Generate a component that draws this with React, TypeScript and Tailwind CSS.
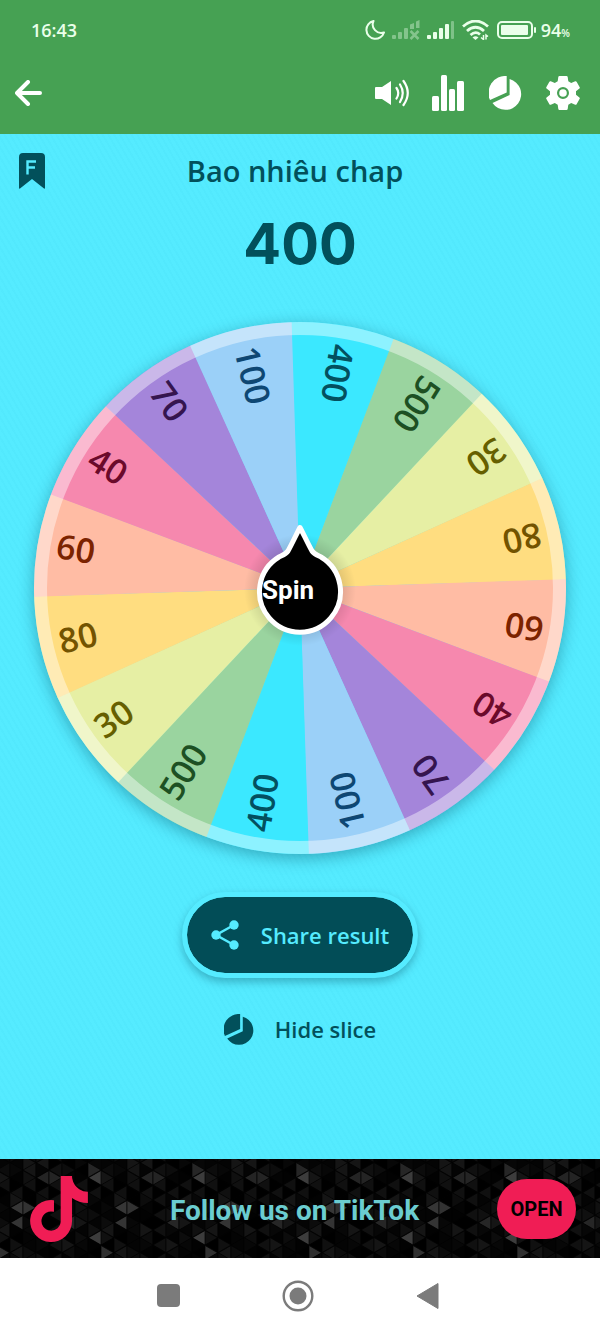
import type { ReactNode } from 'react';
import { FaTiktok } from 'react-icons/fa';

interface Slice {
  label: string;
  fill: string;
  ink: string;
}

const OPTIONS: Slice[] = [
  { label: '400', fill: '#3be8ff', ink: '#03505f' },
  { label: '500', fill: '#9ad49f', ink: '#1d5023' },
  { label: '30', fill: '#e6efa4', ink: '#665f00' },
  { label: '80', fill: '#ffdd80', ink: '#735300' },
  { label: '60', fill: '#ffbca4', ink: '#7c2300' },
  { label: '40', fill: '#f688ae', ink: '#6b0a2b' },
  { label: '70', fill: '#a485da', ink: '#35154f' },
  { label: '100', fill: '#9bd0f8', ink: '#0e4773' },
];

// every option appears twice on the wheel
const SLICES = [...OPTIONS, ...OPTIONS];
const STEP = 360 / SLICES.length;
const START = -1.9;
const RADIUS = 266;

const point = (deg: number, r: number) => {
  const rad = (deg * Math.PI) / 180;
  return `${(Math.sin(rad) * r).toFixed(2)} ${(-Math.cos(rad) * r).toFixed(2)}`;
};

const Wheel = () => (
  <div className="relative w-full max-w-[532px] aspect-square rounded-full shadow-[0_4px_16px_rgba(0,70,90,0.4)]">
    <svg viewBox="-266 -266 532 532" className="block w-full h-full">
      <defs>
        <radialGradient id="hub-shade" gradientUnits="userSpaceOnUse" cx="0" cy="2" r="56">
          <stop offset="0.7" stopColor="#000" stopOpacity="0.13" />
          <stop offset="1" stopColor="#000" stopOpacity="0" />
        </radialGradient>
      </defs>
      {SLICES.map((slice, i) => {
        const from = START + i * STEP;
        return (
          <path
            key={i}
            d={`M0 0L${point(from, RADIUS)}A${RADIUS} ${RADIUS} 0 0 1 ${point(from + STEP + 0.1, RADIUS)}Z`}
            fill={slice.fill}
          />
        );
      })}
      <circle r="259.5" fill="none" stroke="#fff" strokeOpacity="0.42" strokeWidth="13" />
      <circle cy="2" r="56" fill="url(#hub-shade)" />
      {SLICES.map((slice, i) => (
        <text
          key={i}
          x="-247"
          y="10"
          transform={`rotate(${START + (i + 0.5) * STEP + 90})`}
          fill={slice.ink}
          className="font-['Open_Sans',sans-serif] font-semibold text-[34px]"
        >
          {slice.label}
        </text>
      ))}
    </svg>
    <button className="absolute left-1/2 top-1/2 -translate-x-1/2 -translate-y-1/2 w-[88px] h-[132px] text-left pl-[6px] pt-1 text-white font-['Roboto',sans-serif] font-bold text-[26px] leading-8">
      <svg viewBox="-44 -66 88 132" className="absolute inset-0 w-full h-full">
        <path
          d="M0 -60.500C4 -53 8 -44 12 -37C14 -34 17 -33 21 -31A40.500 40.500 0 1 1 -21 -31C-17 -33 -14 -34 -12 -37C-8 -44 -4 -53 0 -60.500Z"
          fill="#000"
          stroke="#fff"
          strokeWidth="5"
          strokeLinejoin="round"
        />
      </svg>
      <span className="relative">Spin</span>
    </button>
  </div>
);

const PieIcon = ({ className }: { className: string }) => (
  <svg viewBox="0 0 34 34" className={className} fill="currentColor">
    <path d="M17.700 0A17 17 0 0 0 1 24L17.700 16.500Z" />
    <path d="M20.600 3A15.700 15.700 0 1 1 3.500 27L20.600 19Z" />
  </svg>
);

const MoonIcon = () => (
  <svg viewBox="0 0 20 20" className="w-5 h-5" fill="none" stroke="currentColor" strokeWidth="2" strokeLinejoin="round">
    <path d="M8.500 1A9 9 0 1 0 19 12.500A8.500 8.500 0 0 1 8.500 1Z" />
  </svg>
);

const SignalIcon = ({ lost = false }: { lost?: boolean }) => (
  <svg viewBox="0 0 28 20" className="w-7 h-5" fill="currentColor">
    <g opacity={lost ? 0.38 : 1}>
      <rect x="0" y="15" width="4" height="4" rx="1" />
      <rect x="6" y="12" width="4" height="7" rx="1" />
      <rect x="12" y="8" width="4" height="11" rx="1" />
      {lost ? (
        <>
          <path d="M18 4.500L22 3V9H18ZM24 1.500L27.500 0V8H24Z" />
          <path d="M18.500 11L26.500 19M26.500 11L18.500 19" fill="none" stroke="currentColor" strokeWidth="2.500" />
        </>
      ) : (
        <>
          <rect x="18" y="4" width="4" height="15" rx="1" />
          <rect x="24" y="1" width="3" height="18" rx="1" opacity="0.35" />
        </>
      )}
    </g>
  </svg>
);

const WifiIcon = () => (
  <svg viewBox="0 0 28 20" className="w-7 h-5" fill="none" stroke="currentColor" strokeWidth="2.800">
    <path d="M1 6.500Q13.500 -4.500 26 6.500" />
    <path d="M5 11Q13.500 3.500 22 11" />
    <path d="M8.500 15Q13.500 10.500 18 14.500" />
    <path d="M13.500 20L10.500 17.500Q13.500 15 16.500 17.500Z" fill="currentColor" stroke="none" />
    <path d="M21.500 15V19.500L19 17.500M24 19.500V15L26 16.500" strokeWidth="1.500" />
  </svg>
);

const BatteryIcon = () => (
  <svg viewBox="0 0 40 18" className="w-10 h-[18px]">
    <rect x="1" y="1" width="34" height="16" rx="4" fill="none" stroke="currentColor" strokeWidth="2" />
    <rect x="4" y="4" width="27" height="10" rx="1" fill="currentColor" />
    <rect x="37" y="6" width="2" height="6" rx="1" fill="currentColor" />
  </svg>
);

const VolumeIcon = () => (
  <svg viewBox="0 0 34 34" className="w-full h-full" fill="none" stroke="currentColor" strokeWidth="2.200" strokeLinecap="round">
    <path d="M1 11H7L16 5V29L7 23H1Q0 23 0 22V12Q0 11 1 11Z" fill="currentColor" stroke="none" />
    <path d="M21.500 12Q25 17 21.500 22.500M25 8.500Q30.500 17 25 26M28.500 5Q37 17 28.500 29" />
  </svg>
);

const BarsIcon = () => (
  <svg viewBox="0 0 34 36" className="w-full h-full" fill="currentColor">
    <rect x="0" y="21" width="7" height="15" rx="1.500" />
    <rect x="9" y="0" width="6" height="36" rx="1.500" />
    <rect x="17" y="14" width="6" height="22" rx="1.500" />
    <rect x="25" y="6" width="7" height="30" rx="1.500" />
  </svg>
);

const GearIcon = () => (
  <svg viewBox="0 0 34 34" className="w-full h-full" fill="currentColor" fillRule="evenodd">
    <path d="M13.500 0H20.500Q21.500 0 21.700 1L22.300 5.200L25.200 6.900L29.200 5.300Q30.100 5 30.600 5.800L33.700 11.200Q34.100 12 33.400 12.600L30 15.300V18.700L33.400 21.400Q34.100 22 33.700 22.800L30.600 28.200Q30.100 29 29.200 28.700L25.200 27.100L22.300 28.800L21.700 33Q21.500 34 20.500 34H13.500Q12.500 34 12.300 33L11.700 28.800L8.800 27.100L4.800 28.700Q3.900 29 3.400 28.200L0.300 22.800Q-0.100 22 0.600 21.400L4 18.700V15.300L0.600 12.600Q-0.100 12 0.300 11.200L3.400 5.800Q3.900 5 4.800 5.300L8.800 6.900L11.700 5.200L12.300 1Q12.500 0 13.500 0ZM17 11A6 6 0 1 0 17 23A6 6 0 1 0 17 11Z" />
    <circle cx="17" cy="17" r="3.800" />
  </svg>
);

const IconButton = ({ label, children }: { label: string; children: ReactNode }) => (
  <button aria-label={label} className="w-[34px] h-9 flex items-center justify-center">
    {children}
  </button>
);

// Banner backdrop: columns of small triangles, a few of them lit
const COL = 13;
const SIDE = 15;
const LIT: Record<string, string> = {
  'L7-1': '#3c3c3c',
  'R7-1': '#262626',
  'L1-3': '#363636',
  'R2-3': '#323232',
  'L1-4': '#343434',
  'L7-5': '#3c3c3c',
  'R0-6': '#303030',
  'L5-4': '#262626',
  'R4-1': '#242424',
  'L3-1': '#242424',
};
const DARK = ['#040404', '#101010', '#070707', '#151515', '#020202', '#0c0c0c', '#000000'];

const TRIANGLES = Array.from({ length: 8 * 8 * 2 }, (_, n) => {
  const left = n % 2 === 0;
  const col = Math.floor(n / 2) % 8;
  const row = Math.floor(n / 16);
  const line = left ? col + 1 : col;
  const cy = row * SIDE + (line % 2 === 0 ? 4 : -4);
  const base = line * COL;
  const tip = left ? base - COL : base + COL;
  return {
    points: `${base},${cy - 7.5} ${base},${cy + 7.5} ${tip},${cy}`,
    fill: LIT[`${left ? 'L' : 'R'}${col}-${row}`] ?? DARK[(col * 5 + row * 3 + (left ? 2 : 0) + col * row) % 7],
  };
});

const BannerPattern = () => (
  <svg className="absolute inset-0 w-full h-full">
    <defs>
      <pattern id="triangles" x="-3" width="104" height="106" patternUnits="userSpaceOnUse">
        <rect width="104" height="106" fill="#060606" />
        {TRIANGLES.map((t, i) => (
          <polygon key={i} points={t.points} fill={t.fill} stroke="#000" strokeWidth="0.7" />
        ))}
      </pattern>
    </defs>
    <rect width="100%" height="100%" fill="url(#triangles)" />
  </svg>
);

const App = () => {
  return (
    <div className="min-h-screen flex flex-col bg-white font-['Open_Sans',sans-serif]">
      <header className="bg-[#46a153] text-white pb-2">
        <div className="h-[60px] pl-[31px] pr-[30px] flex items-center justify-between text-[#eaffea]">
          <span className="text-lg font-semibold">16:43</span>
          <div className="flex items-center gap-[7px]">
            <MoonIcon />
            <SignalIcon lost />
            <SignalIcon />
            <WifiIcon />
            <div className="flex items-center gap-1">
              <BatteryIcon />
              <span className="text-lg font-semibold">
                94<span className="text-[10px]">%</span>
              </span>
            </div>
          </div>
        </div>
        <div className="h-[66px] pl-[15px] pr-5 flex items-center justify-between">
          <button aria-label="Back">
            <svg viewBox="0 0 28 26" className="w-7 h-[26px]" fill="none" stroke="currentColor" strokeWidth="4" strokeLinecap="round" strokeLinejoin="round">
              <path d="M25 13H2M13 2L2 13L13 24" />
            </svg>
          </button>
          <div className="flex items-center gap-[23px]">
            <IconButton label="Sound">
              <VolumeIcon />
            </IconButton>
            <IconButton label="Statistics">
              <BarsIcon />
            </IconButton>
            <IconButton label="Slices">
              <PieIcon className="w-full" />
            </IconButton>
            <IconButton label="Settings">
              <GearIcon />
            </IconButton>
          </div>
        </div>
      </header>

      <main className="flex-1 flex flex-col items-center pt-[19px] text-[#02505b] bg-[#55ebff] bg-[repeating-linear-gradient(60deg,rgba(0,160,200,0.03)_0px,rgba(0,160,200,0.03)_2px,transparent_2px,transparent_5px)]">
        <div className="w-full px-[19px] flex items-center">
          <button aria-label="Favourite" className="w-[26px] h-9">
            <svg viewBox="0 0 26 36" className="w-full h-full">
              <path d="M4 0H22Q26 0 26 4V35Q26 36 25 35.500L13 26L1 35.500Q0 36 0 35V4Q0 0 4 0Z" fill="currentColor" />
              <path d="M17 8.500H8.500V21.500M8.500 14.500H16" fill="none" stroke="#55ebff" strokeWidth="2.400" />
            </svg>
          </button>
          <h1 className="flex-1 pr-9 text-center text-[29px] leading-9 font-semibold">Bao nhiêu chap</h1>
        </div>
        <output className="mt-[23px] font-['Inter',sans-serif] font-bold text-[56px] leading-[64px]">400</output>

        <div className="w-full px-[34px] mt-[46px] flex justify-center">
          <Wheel />
        </div>

        <button className="mt-[38px] h-[86px] px-6 flex items-center gap-[22px] rounded-full border-[5px] border-[#55ebff] bg-[#024d57] bg-clip-padding text-[#55ebff] text-[22px] font-semibold shadow-[0_4px_8px_rgba(0,70,90,0.35)]">
          <svg viewBox="0 0 28 30" className="w-7 h-[30px]" fill="currentColor">
            <path d="M23 5L5 15L23 25" fill="none" stroke="currentColor" strokeWidth="2.500" />
            <circle cx="23" cy="5" r="4.700" />
            <circle cx="5" cy="15" r="4.700" />
            <circle cx="23" cy="25" r="4.700" />
          </svg>
          Share result
        </button>

        <button className="mt-[35px] h-8 flex items-center gap-5 text-[22px] font-semibold">
          <PieIcon className="w-[31px] h-[31px]" />
          Hide slice
        </button>
      </main>

      <section className="relative h-[99px] bg-black">
        <BannerPattern />
        <div className="relative h-full pl-[30px] pr-6 flex items-center justify-between">
          <FaTiktok className="w-[58px] h-[66px] text-[#f01d55]" />
          <p className="pl-1 pt-1 font-['Roboto',sans-serif] text-[28px] font-bold text-[#6bcdd0]">Follow us on TikTok</p>
          <button className="w-[79px] h-[60px] rounded-full bg-[#f01d55] text-black font-['Roboto',sans-serif] text-xl font-bold">
            OPEN
          </button>
        </div>
      </section>

      <nav className="h-[75px] pr-1 flex items-center justify-center gap-[98px] bg-white text-[#7b7b7b]">
        <button aria-label="Recent apps" className="w-8 h-8 flex items-center justify-center">
          <span className="w-[23px] h-[23px] rounded bg-[#7b7b7b]" />
        </button>
        <button aria-label="Home" className="w-8 h-8">
          <svg viewBox="0 0 32 32" className="w-full h-full" fill="currentColor">
            <circle cx="16" cy="16" r="14.300" fill="none" stroke="currentColor" strokeWidth="2.400" />
            <circle cx="16" cy="16" r="8.500" />
          </svg>
        </button>
        <button aria-label="Go back" className="w-8 h-8">
          <svg viewBox="0 0 32 32" className="w-full h-full" fill="currentColor">
            <path d="M26 3.500V28.500L5 16Z" stroke="currentColor" strokeLinejoin="round" />
          </svg>
        </button>
      </nav>
    </div>
  );
};

export default App;
